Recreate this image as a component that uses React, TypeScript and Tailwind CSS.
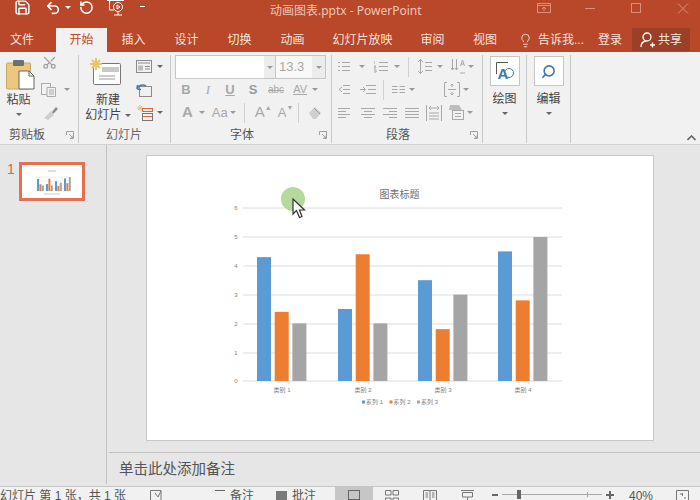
import type { ReactNode } from 'react'
import { Save, Undo2, RotateCcw, Lightbulb, Scissors, Search } from 'lucide-react'

const GRID = [208, 237, 266, 295, 324, 353, 381]
const SERIES = ['#5b9bd5', '#ed7d31', '#a5a5a5']
const CATEGORIES = [
  { label: '类别 1', x: 257, values: [4.3, 2.4, 2] },
  { label: '类别 2', x: 338, values: [2.5, 4.4, 2] },
  { label: '类别 3', x: 418, values: [3.5, 1.8, 3] },
  { label: '类别 4', x: 498, values: [4.5, 2.8, 5] },
]

function Caret({ className = '' }: { className?: string }) {
  return <span className={`inline-block w-0 h-0 border-x-[3px] border-x-transparent border-t-[3px] border-t-[#9a9a9a] ${className}`} />
}

// a paragraph-group glyph: d is the path, drawn in the ribbon's disabled grey
function P({ w = 14, h = 13, d, className = '' }: { w?: number; h?: number; d: string; className?: string }) {
  return (
    <svg width={w} height={h} className={`shrink-0 ${className}`} fill="none" stroke="#a8a8a8">
      <path d={d} />
    </svg>
  )
}

function Launcher() {
  return (
    <svg width="8" height="8" className="text-[#a0a0a0] shrink-0" fill="none" stroke="currentColor">
      <path d="M0.5 4V0.5H7.5V7.5H4M3 3L7 7M7 4.5V7H4.5" />
    </svg>
  )
}

function Group({ label, className, launcher, labelClass, children }: { label: string; className: string; launcher?: boolean; labelClass: string; children: ReactNode }) {
  return (
    <div className={`flex flex-col shrink-0 border-r border-[#c8c8c8] h-[88px] ${className}`}>
      <div className="h-[69px] flex">{children}</div>
      <div className="flex items-center h-[19px] pt-[3px] text-[12px] text-[#666] leading-none">
        <span className={labelClass}>{label}</span>
        {launcher && <span className="ml-auto mr-[4px] flex"><Launcher /></span>}
      </div>
    </div>
  )
}

function Row({ className = '', children }: { className?: string; children: ReactNode }) {
  return <div className={`h-[23px] flex items-center ${className}`}>{children}</div>
}

function PasteIcon() {
  return (
    <svg width="29" height="31" viewBox="0 0 29 31" className="shrink-0">
      <rect x="0.5" y="4" width="24" height="26" rx="1" fill="#eec77f" stroke="#c9a66b" />
      <rect x="7" y="1" width="11" height="6" rx="1" fill="#6f6f6f" />
      <path d="M13 12H23L28 17V30H13Z" fill="#fff" stroke="#666" />
      <path d="M23 12V17H28" fill="none" stroke="#666" />
    </svg>
  )
}

function NewSlideIcon() {
  return (
    <svg width="32" height="28" viewBox="0 0 32 28" className="shrink-0">
      <rect x="3.5" y="5.5" width="27" height="21" rx="1" fill="#fff" stroke="#777" />
      <rect x="12" y="9" width="17" height="5" fill="#c8c8c8" />
      <path d="M9 18H25M9 21H25" stroke="#999" />
      <path d="M6 0V12M0 6H12M2 2L10 10M10 2L2 10" stroke="#e8c46a" strokeWidth="2" />
    </svg>
  )
}

function LayoutIcon() {
  return (
    <svg width="16" height="13" className="shrink-0" fill="none" stroke="#8a8a8a">
      <rect x="0.5" y="0.5" width="15" height="12" />
      <rect x="2" y="2" width="12" height="2" fill="#bdbdbd" stroke="none" />
      <rect x="2" y="5.5" width="5" height="5" fill="#bdbdbd" stroke="none" />
      <path d="M9 6.5H14M9 9H14" />
    </svg>
  )
}

function ResetIcon() {
  return (
    <svg width="16" height="14" className="shrink-0" fill="none">
      <rect x="3.5" y="3.5" width="12" height="10" stroke="#8a8a8a" />
      <path d="M1 6C2 2 7 1 10 3M1 6L5 6.5M1 6L1.5 2" stroke="#3f7fb8" strokeWidth="1.6" />
    </svg>
  )
}

function SectionIcon() {
  return (
    <svg width="17" height="16" className="shrink-0" fill="none">
      <path d="M4 0V6M1 3H7M2 1L6 5M6 1L2 5" stroke="#e8c46a" />
      <rect x="6.5" y="3.5" width="10" height="3" stroke="#d9663f" />
      <rect x="6.5" y="8.5" width="10" height="7" stroke="#777" />
      <path d="M7 11.5H16" stroke="#d9663f" />
    </svg>
  )
}

function ThumbChart() {
  return (
    <svg width="60" height="33" viewBox="0 0 60 33">
      <rect width="60" height="33" fill="#fff" />
      {[12, 16, 20, 24].map((y) => <path key={y} d={`M14 ${y}H46`} stroke="#ddd" strokeWidth="0.5" />)}
      {CATEGORIES.map((c, i) =>
        c.values.map((v, j) => (
          <rect key={j} x={15 + i * 9 + j * 2.4} y={26 - v * 2.8} width="2" height={v * 2.8} fill={SERIES[j]} />
        )),
      )}
      <path d="M26 6H34" stroke="#bbb" />
      <path d="M22 29H38" stroke="#ccc" />
    </svg>
  )
}

function Chart() {
  return (
    <svg width="506" height="284" viewBox="147 156 506 284" className="block">
      <text x="399.500" y="198" textAnchor="middle" fontSize="10" fill="#707070">图表标题</text>
      {GRID.map((y, i) => (
        <g key={y}>
          <path d={`M243 ${y}H562`} stroke="#dcdcdc" />
          <text x="236" y={y + 2} textAnchor="middle" fontSize="6" fill="#808080">{6 - i}</text>
        </g>
      ))}
      {CATEGORIES.map((c) => (
        <g key={c.label}>
          {c.values.map((v, j) => (
            <rect key={j} x={c.x + j * 17.7} y={381 - v * 28.8} width="14" height={v * 28.8} fill={SERIES[j]} />
          ))}
          <text x={c.x + 25} y="391.500" textAnchor="middle" fontSize="6" fill="#808080">{c.label}</text>
        </g>
      ))}
      {['系列 1', '系列 2', '系列 3'].map((s, i) => (
        <g key={s}>
          <rect x={362 + i * 27.500} y="400.500" width="3" height="3" fill={SERIES[i]} />
          <text x={366 + i * 27.500} y="404" fontSize="6" fill="#808080">{s}</text>
        </g>
      ))}
    </svg>
  )
}

export default function App() {
  return (
    <div className="w-[700px] h-[500px] overflow-hidden flex flex-col bg-[#e6e6e6] font-['Liberation_Sans','Noto_Sans_CJK_SC',sans-serif]">
      {/* title bar */}
      <div className="h-[28px] shrink-0 bg-[#b9472a] flex items-start text-white">
        <Save size={17} strokeWidth={2} className="ml-[14px] mt-[-1px]" />
        <Undo2 size={16} strokeWidth={2.4} className="ml-[14px]" />
        <span className="ml-[4px] mt-[6px] w-0 h-0 border-x-[3px] border-x-transparent border-t-[3px] border-t-white" />
        <RotateCcw size={15} strokeWidth={2.4} className="ml-[8px]" />
        <svg width="18" height="17" className="ml-[13px] mt-[-1px]" fill="none" stroke="#fff">
          <path d="M0 1.500H17M2.500 2V11H7" />
          <circle cx="11" cy="8" r="4.500" />
          <path d="M10 6L13 8L10 10Z" />
          <path d="M7 16H15M11 13V16" />
        </svg>
        <span className="ml-[15px] mt-[6px] w-[5px] h-[1px] bg-white" />
        <div className="ml-[125px] mt-[3px] text-[12px] leading-[16px] text-[#f0c5b5] font-['Noto_Sans','Noto_Sans_CJK_SC',sans-serif] whitespace-nowrap w-[156px]">动画图表.pptx - PowerPoint</div>
        <svg width="14" height="10" className="ml-[111px] mt-[3px]" fill="none" stroke="#d98f79">
          <rect x="0.5" y="0.5" width="13" height="9" />
          <path d="M0.5 2.500H13.500M7 8V4M5 6L7 4L9 6" />
        </svg>
        <span className="ml-[34px] mt-[8px] w-[10px] h-[1px] bg-[#d98f79]" />
        <span className="ml-[36px] mt-[3px] w-[10px] h-[10px] border border-[#d98f79]" />
        <svg width="12" height="11" className="ml-[36px] mt-[3px]" fill="none" stroke="#d98f79"><path d="M1 0.500L11 10.500M11 0.500L1 10.500" /></svg>
      </div>

      {/* tabs */}
      <div className="h-[24px] shrink-0 bg-[#b9472a] flex items-stretch text-[12px] leading-[24px] text-[#f8e4dc] text-center">
        <div className="w-[44px]">文件</div>
        <div className="w-[51px] ml-[12px] bg-[#f1f1f1] text-[#c0482a]">开始</div>
        <div className="w-[53px]">插入</div>
        <div className="w-[53px]">设计</div>
        <div className="w-[53px]">切换</div>
        <div className="w-[53px]">动画</div>
        <div className="w-[87px]">幻灯片放映</div>
        <div className="w-[53px]">审阅</div>
        <div className="w-[52px]">视图</div>
        <div className="ml-[7px] flex items-center">
          <Lightbulb size={15} strokeWidth={1.4} />
          <span className="ml-[5px] whitespace-nowrap">告诉我...</span>
        </div>
        <div className="ml-[14px]">登录</div>
        <div className="ml-[10px] w-[58px] bg-[#9b3f27] mb-[1px] flex items-center justify-center">
          <svg width="15" height="16" fill="none" stroke="#fff" strokeWidth="1.300">
            <circle cx="7" cy="5" r="4" />
            <path d="M1 15C1 11 3 9.500 6 9M10 13H15M12.500 10.500V15.500" />
          </svg>
          <span className="ml-[3px]">共享</span>
        </div>
      </div>

      {/* ribbon */}
      <div className="h-[93px] shrink-0 bg-[#f1f1f1] border-b border-[#d2d2d2] flex pt-[3px] text-[#444]">
        <Group label="剪贴板" launcher className="w-[79px]" labelClass="ml-[9px] text-[#555]">
          <div className="w-[41px] flex flex-col items-center pt-[4px]">
            <div className="ml-[-1px]"><PasteIcon /></div>
            <span className="text-[12px] leading-[14px] mt-[3px] ml-[-4px]">粘贴</span>
            <Caret className="mt-[6px] ml-[-4px] !border-t-[#666]" />
          </div>
          <div className="flex flex-col">
            <Row><Scissors size={15} className="text-[#a0a0a0] mt-[-8px] ml-[1px] -rotate-90" /></Row>
            <Row>
              <svg width="15" height="14" fill="none" stroke="#aaa"><rect x="0.500" y="0.500" width="9" height="11" /><path d="M6 4.500H14.500V13.500H6ZM8 7H13M8 9H13M8 11H13" fill="#f1f1f1" /></svg>
              <Caret className="ml-[8px]" />
            </Row>
            <Row>
              <svg width="15" height="14" className="ml-[2px]"><path d="M9 6L13 1L15 3L10 8Z" fill="#8a8a8a" /><path d="M1 12L8 5L11 9L5 14Z" fill="#cfcfcf" /></svg>
            </Row>
          </div>
        </Group>

        <Group label="幻灯片" className="w-[92px]" labelClass="ml-[27px] text-[#666]">
          <div className="w-[55px] flex flex-col items-center pt-[3px]">
            <div className="ml-[-1px]"><NewSlideIcon /></div>
            <span className="text-[12px] leading-[14px] mt-[7px] ml-[3px]">新建</span>
            <span className="text-[12px] leading-[16px] whitespace-nowrap ml-[3px]">幻灯片 <Caret className="align-middle !border-t-[#666]" /></span>
          </div>
          <div className="flex flex-col ml-[2px]">
            <Row><LayoutIcon /><Caret className="ml-[5px] !border-t-[#666]" /></Row>
            <Row><ResetIcon /></Row>
            <Row><SectionIcon /><Caret className="ml-[4px] !border-t-[#666]" /></Row>
          </div>
        </Group>

        <Group label="字体" launcher className="w-[161px]" labelClass="ml-[59px] text-[#555]">
          <div className="flex flex-col text-[#a8a8a8]">
            <div className="h-[24px] ml-[4px] w-[151px] border border-[#c6c6c6] flex mt-0">
              <div className="w-[88px] bg-white" />
              <div className="w-[11px] bg-[#ececec] flex items-center justify-center"><Caret /></div>
              <div className="w-[1px] bg-[#c6c6c6]" />
              <div className="w-[36px] bg-[#f8f8f8] text-[13px] leading-[22px] pl-[3px] text-[#a8a8a8]">13.3</div>
              <div className="flex-1 bg-[#ececec] flex items-center justify-center"><Caret /></div>
            </div>
            <Row className="font-bold text-[13px] mt-[-1px]">
              <span className="w-[10px] ml-[10px] text-center">B</span>
              <span className="w-[10px] ml-[12px] text-center italic font-['Liberation_Serif',serif] font-normal">I</span>
              <span className="w-[10px] ml-[12px] text-center underline">U</span>
              <span className="w-[10px] ml-[13px] text-center text-[#999]">S</span>
              <span className="ml-[10px] text-[10px] font-normal line-through">abc</span>
              <span className="ml-[9px] text-[11px] leading-[10px] font-normal border-b border-[#a8a8a8]">AV</span>
              <Caret className="ml-[5px]" />
            </Row>
            <Row className="text-[15px]">
              <span className="ml-[11px] font-bold">A</span>
              <Caret className="ml-[6px]" />
              <span className="ml-[7px] text-[13px]">Aa</span>
              <Caret className="ml-[2px]" />
              <span className="ml-[8px] h-[20px] w-[1px] bg-[#d0d0d0]" />
              <span className="ml-[10px]">A</span><span className="text-[7px] mb-[8px]">▲</span>
              <span className="ml-[6px] text-[13px]">A</span><span className="text-[7px] mb-[8px]">▼</span>
              <span className="ml-[5px] h-[20px] w-[1px] bg-[#d0d0d0]" />
              <svg width="14" height="14" className="ml-[9px]"><path d="M1 7L7 1L13 7L8 13L5 13Z" fill="#cfcfcf" /><path d="M6 2L12 8" stroke="#999" /></svg>
            </Row>
          </div>
        </Group>

        <Group label="段落" launcher className="w-[151px]" labelClass="ml-[54px] text-[#555]">
          <div className="flex flex-col pl-[6px]">
            <Row>
              <P w={12} d="M0 2.500H2M4 2.500H12M0 6.500H2M4 6.500H12M0 10.500H2M4 10.500H12" />
              <Caret className="ml-[9px]" />
              <P w={14} d="M0 1V4M0 6H2L0 8H2M0 10H2V12H0M5 2.500H14M5 6.500H14M5 10.500H14" className="ml-[9px]" />
              <Caret className="ml-[6px]" />
              <span className="ml-[8px] h-[20px] w-[1px] bg-[#d0d0d0]" />
              <P w={14} h={15} d="M2.500 0V15M0 3L2.500 0.500L5 3M0 12L2.500 14.500L5 12M7 3.500H14M7 7.500H14M7 11.500H14" className="ml-[9px]" />
              <Caret className="ml-[5px]" />
              <P w={14} h={15} d="M1.500 0V11M5.500 0V11M0 9L1.500 11L3 9M4 9L5.500 11L7 9M9 14H14M9.500 7L11.500 1L13.500 7M10 5H13" className="ml-[8px]" />
              <Caret className="ml-[3px]" />
            </Row>
            <Row>
              <P w={12} d="M5 2.500H12M5 6.500H12M5 10.500H12M4 4L1 6.500L4 9" />
              <P w={16} d="M6 2.500H16M8 6.500H16M6 10.500H16M0 6.500H5M3 4L5.500 6.500L3 9" className="ml-[10px]" />
              <span className="ml-[7px] h-[20px] w-[1px] bg-[#d0d0d0]" />
              <P w={13} d="M0 3.500H5.500M0 6.500H5.500M0 9.500H5.500M7.500 3.500H13M7.500 6.500H13M7.500 9.500H13" className="ml-[8px]" />
              <Caret className="ml-[4px]" />
              <P w={16} h={15} d="M3 0.500H0.500V14.500H3M13 0.500H15.500V14.500H13M4 7.500H12M8 2V5M6.500 3.500L8 2L9.500 3.500M8 10V13M6.500 11.500L8 13L9.500 11.500" className="ml-[29px]" />
              <Caret className="ml-[3px]" />
            </Row>
            <Row>
              <P w={12} d="M0 2.500H12M0 5.500H8M0 8.500H12M0 11.500H8" />
              <P w={14} d="M0 2.500H14M3 5.500H11M0 8.500H14M3 11.500H11" className="ml-[11px]" />
              <P w={14} d="M0 2.500H14M6 5.500H14M0 8.500H14M6 11.500H14" className="ml-[8px]" />
              <P w={14} d="M0 2.500H14M0 5.500H14M0 8.500H14M0 11.500H14" className="ml-[8px]" />
              <P w={16} h={16} d="M0.500 0V16M15.500 0V16M3 3H13M5 1L3 3L5 5M11 1L13 3L11 5M3 8H13M3 11H13M3 14H13" className="ml-[7px]" />
              <svg width="16" height="15" className="ml-[6px] shrink-0" fill="none">
                <path d="M2 0H11L14 5H1Z" fill="#bdbdbd" />
                <rect x="4.500" y="5.500" width="11" height="9" fill="#f1f1f1" stroke="#a8a8a8" />
                <path d="M7 8.500H13M7 11.500H13" stroke="#a8a8a8" />
              </svg>
              <Caret className="ml-[3px]" />
            </Row>
          </div>
        </Group>

        <Group label="" className="w-[44px]" labelClass="">
          <div className="flex flex-col items-center w-full">
            <div className="w-[30px] h-[30px] mt-[1px] bg-white border border-[#c6c6c6] flex items-center justify-center">
              <svg width="18" height="19" fill="none">
                <path d="M0.500 12V0.500H12" stroke="#555" />
                <circle cx="13" cy="11" r="4.500" stroke="#3f77ad" />
                <text x="1.500" y="17" fontSize="15" fontWeight="700" fill="#3f77ad" fontFamily="Liberation Sans">A</text>
              </svg>
            </div>
            <span className="text-[12px] leading-[14px] mt-[6px]">绘图</span>
            <Caret className="mt-[6px] !border-t-[#666]" />
          </div>
        </Group>

        <Group label="" className="w-[44px]" labelClass="">
          <div className="flex flex-col items-center w-full">
            <div className="w-[30px] h-[30px] mt-[1px] bg-white border border-[#c6c6c6] flex items-center justify-center">
              <Search size={15} strokeWidth={2.5} className="text-[#3f77ad] -scale-x-100" />
            </div>
            <span className="text-[12px] leading-[14px] mt-[6px]">编辑</span>
            <Caret className="mt-[6px] !border-t-[#666]" />
          </div>
        </Group>

        <div className="flex-1 flex justify-end items-end pb-[3px] pr-[4px]">
          <svg width="9" height="6" fill="none" stroke="#666" strokeWidth="1.600"><path d="M0.500 5L4.500 1L8.500 5" /></svg>
        </div>
      </div>

      {/* body */}
      <div className="flex-1 min-h-0 flex">
        <div className="w-[107px] shrink-0 border-r border-[#c2c2c2] mb-[2px] pt-[17px] flex items-start">
          <span className="ml-[7px] w-[9px] text-[14px] leading-[14px] text-[#d9674a]">1</span>
          <div className="ml-[3px] border-[3px] border-[#e4704f] bg-white"><div className="flex"><ThumbChart /></div></div>
        </div>
        <div className="flex-1 flex flex-col min-w-0">
          <div className="h-[307px] pt-[10px] pl-[39px]">
            <div className="relative w-[508px] h-[286px] bg-white border border-[#c8c8c8]">
              <Chart />
              <div className="absolute left-[134px] top-[31px] w-[24px] h-[24px] rounded-full bg-[#b5d89b]" />
              <svg width="14" height="21" viewBox="0 0 14 21" className="absolute left-[145px] top-[42px]">
                <path d="M1 1V16L4.500 12.500L7.500 19.500L10 18.500L7.500 12H12.500Z" fill="#fff" stroke="#333" strokeWidth="1.200" />
              </svg>
            </div>
          </div>
          <div className="h-[32px] ml-[2px] border-t border-[#c2c2c2] pl-[10px] text-[14.500px] leading-[33px] text-[#555] whitespace-nowrap">单击此处添加备注</div>
        </div>
      </div>

      {/* status bar */}
      <div className="h-[14px] shrink-0 bg-[#f1f1f1] border-t border-[#c6c6c6] flex items-start text-[12px] leading-[18px] text-[#555] whitespace-nowrap">
        <span className="w-[150px] shrink-0">幻灯片 第 1 张，共 1 张</span>
        <svg width="12" height="12" className="mt-[3px] shrink-0" fill="none" stroke="#777"><path d="M0.500 11V0.500H11V11M5 3L8 7L11 1" /></svg>
        <span className="ml-[53px] mt-[3px] w-[10px] h-[8px] border-t border-[#666] shrink-0" />
        <span className="ml-[5px] w-[24px] shrink-0">备注</span>
        <span className="ml-[22px] mt-[4px] w-[11px] h-[10px] bg-[#7a7a7a] shrink-0" />
        <span className="ml-[5px] w-[24px] shrink-0">批注</span>
        <div className="ml-[19px] w-[38px] h-[14px] bg-[#c6c6c6] flex justify-center pt-[3px] shrink-0"><span className="w-[12px] h-[10px] border border-[#666]" /></div>
        <svg width="14" height="12" className="ml-[12px] mt-[3px] shrink-0" fill="none" stroke="#777"><path d="M0.500 0.500H6V5H0.500ZM8 0.500H13.500V5H8ZM0.500 8H6V12H0.500ZM8 8H13.500V12H8Z" /></svg>
        <svg width="14" height="12" className="ml-[24px] mt-[3px] shrink-0" fill="none" stroke="#777"><path d="M0.500 0.500H13.500V12H0.500ZM7 0.500V12M2.500 3H5M2.500 5H5M2.500 7H5M9 3H11.500M9 5H11.500M9 7H11.500" /></svg>
        <svg width="14" height="12" className="ml-[24px] mt-[3px] shrink-0" fill="none" stroke="#777"><path d="M0 0.500H13M1.500 2.500H11.500V7H1.500ZM6.500 7V12" /></svg>
        <span className="ml-[17px] mt-[7px] w-[6px] h-[2px] bg-[#666] shrink-0" />
        <div className="ml-[4px] mt-[7px] w-[100px] h-[1px] bg-[#a8a8a8] flex justify-center items-center shrink-0">
          <span className="w-[4px] h-[9px] bg-[#666] mr-[66px]" />
          <span className="w-[1px] h-[5px] bg-[#a8a8a8]" />
        </div>
        <svg width="8" height="8" className="ml-[4px] mt-[4px] shrink-0" stroke="#666" strokeWidth="2"><path d="M0 4H8M4 0V8" /></svg>
        <span className="ml-[15px] w-[24px] shrink-0">40%</span>
        <svg width="13" height="12" className="ml-[23px] mt-[3px] shrink-0" fill="none" stroke="#777"><path d="M0.500 12V0.500H12.500V12M4 4H6M6.500 3V6M9 7V9" /></svg>
      </div>
    </div>
  )
}
